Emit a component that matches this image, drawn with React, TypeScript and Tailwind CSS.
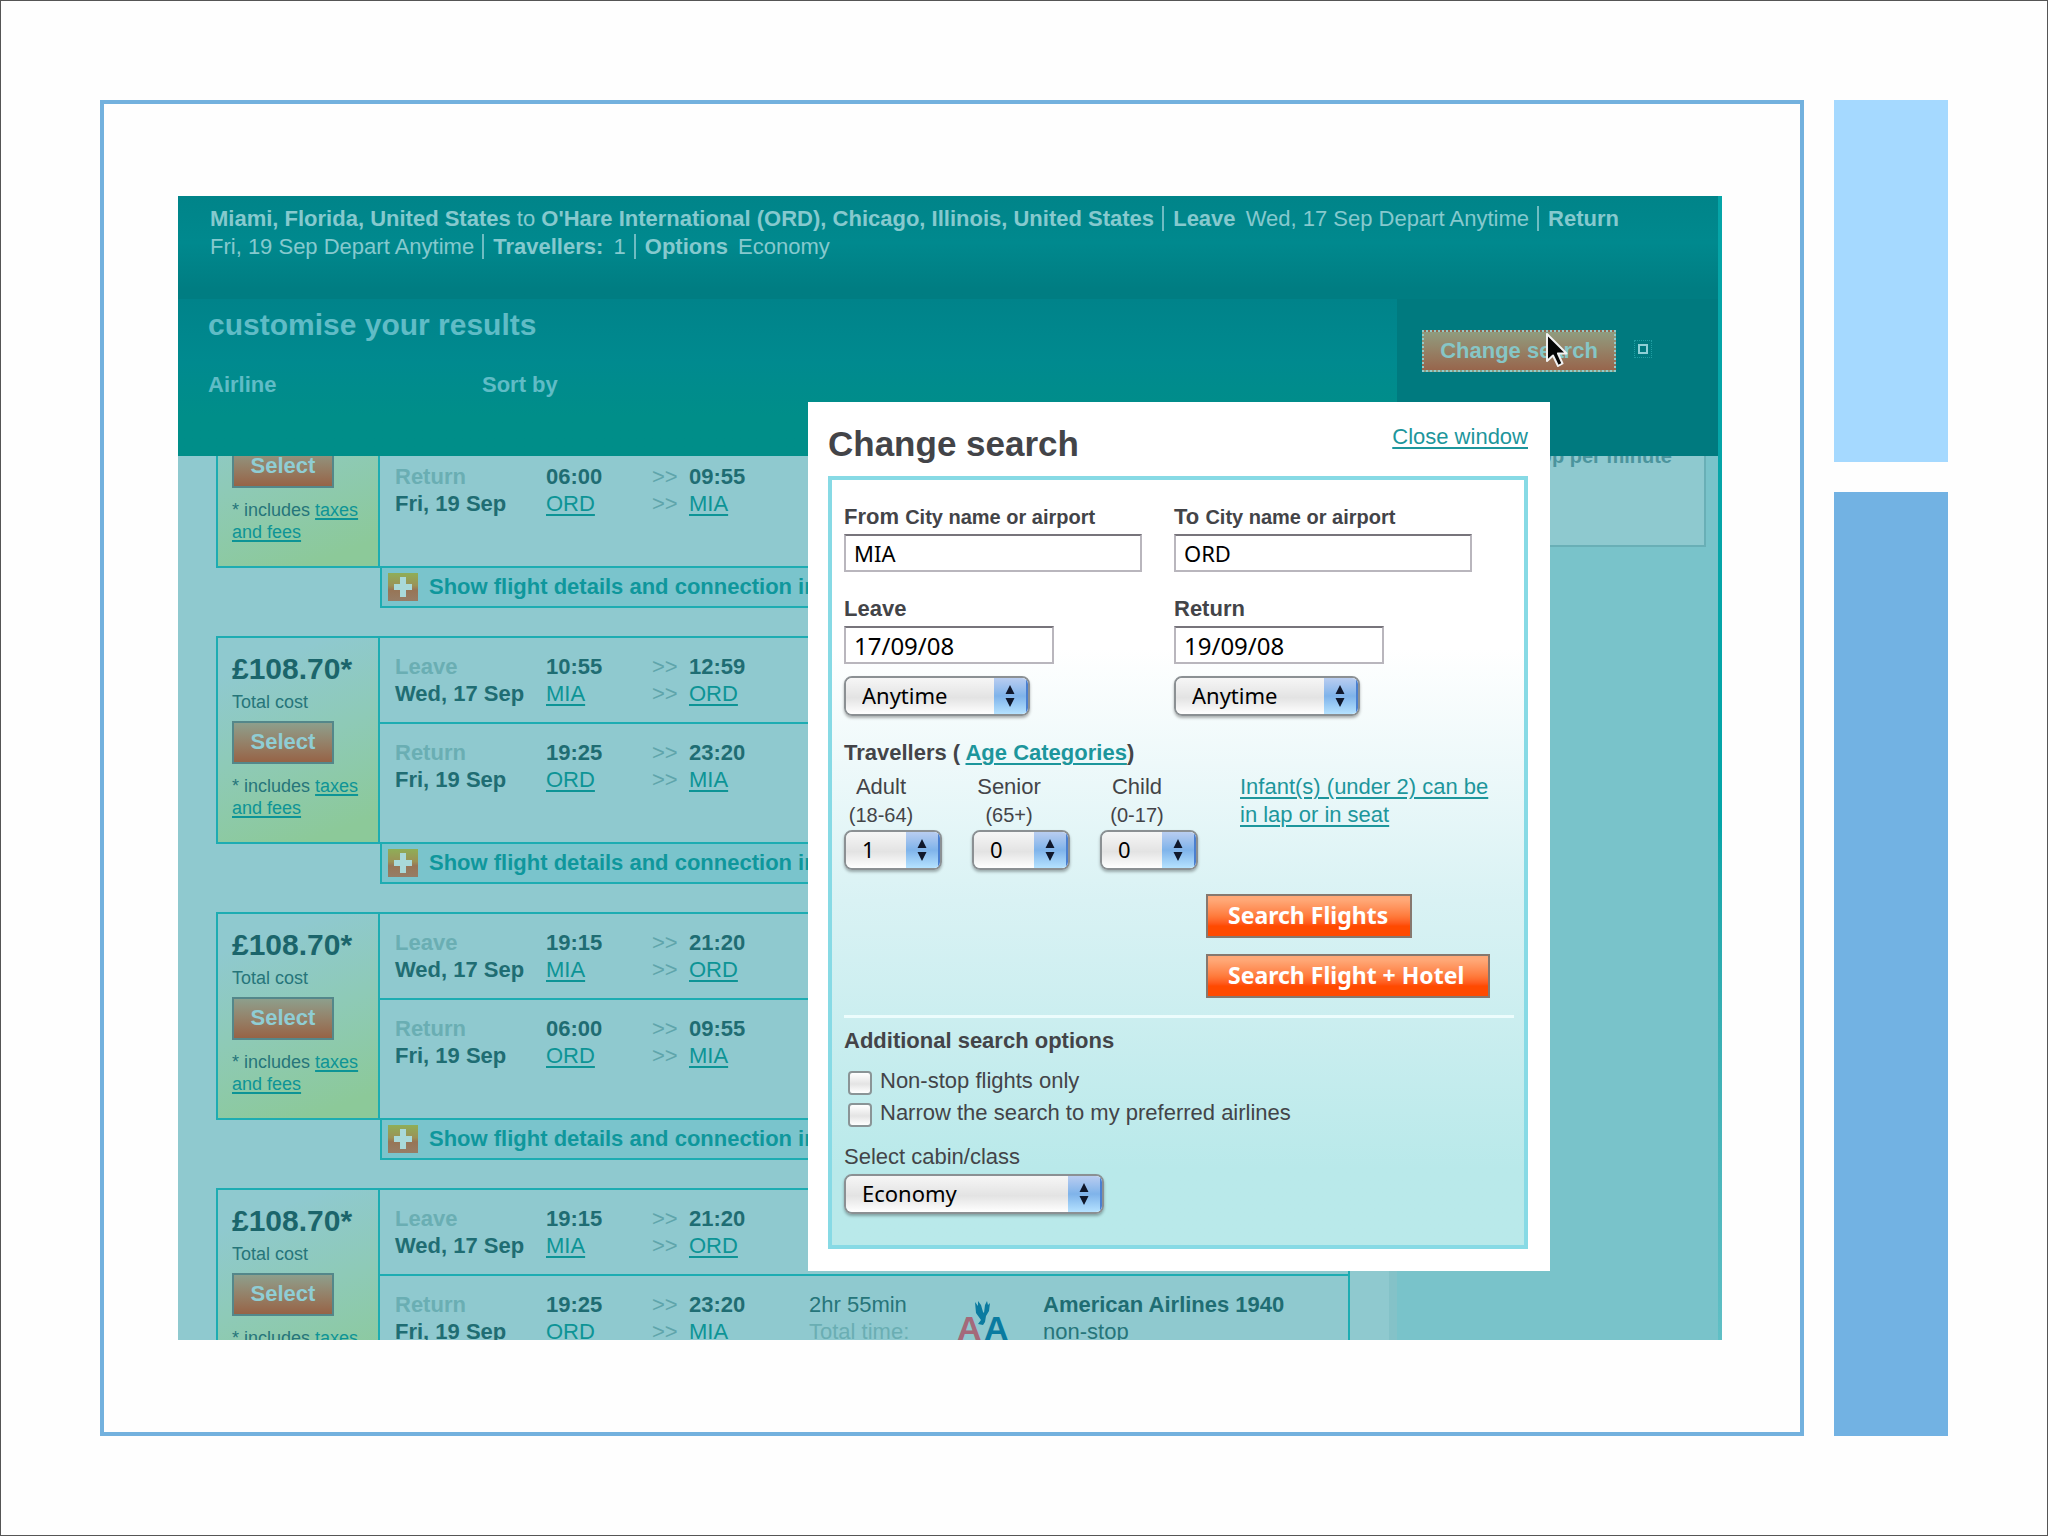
import React from "react";

type Leg = {
  label: string;
  date: string;
  dep: string;
  from: string;
  arr: string;
  to: string;
  service?: { duration: string; name: string; stops: string };
};

const out = (dep: string, arr: string): Leg => ({ label: "Leave", date: "Wed, 17 Sep", dep, from: "MIA", arr, to: "ORD" });
const back = (dep: string, arr: string): Leg => ({ label: "Return", date: "Fri, 19 Sep", dep, from: "ORD", arr, to: "MIA" });

const flights: { id: number; legs: Leg[] }[] = [
  { id: 1, legs: [out("19:15", "21:20"), back("06:00", "09:55")] },
  { id: 2, legs: [out("10:55", "12:59"), back("19:25", "23:20")] },
  { id: 3, legs: [out("19:15", "21:20"), back("06:00", "09:55")] },
  {
    id: 4,
    legs: [
      out("19:15", "21:20"),
      { ...back("19:25", "23:20"), service: { duration: "2hr 55min", name: "American Airlines 1940", stops: "non-stop" } },
    ],
  },
];

function AirlineLogo() {
  return (
    <svg width="56" height="46" viewBox="0 0 56 46" role="img" aria-label="American Airlines">
      <text x="0" y="40" fontFamily="Liberation Sans" fontWeight="bold" fontSize="34" fill="#a4697a">A</text>
      <text x="27" y="40" fontFamily="Liberation Sans" fontWeight="bold" fontSize="34" fill="#0a7ba0">A</text>
      <path d="M18 2 L21 6 L21 1 L24 5 L26 12 L27 13 L28 5 L30 1 L31 5 L33 3 L32 11 L29 16 L28 22 L26 25 L21 24 L24 20 L19 13 Z" fill="#0a7ba0" />
    </svg>
  );
}

function PlusIcon() {
  return (
    <svg width="30" height="28" viewBox="0 0 30 28" className="shrink-0" aria-hidden="true">
      <defs>
        <linearGradient id="plus" x1="0" y1="0" x2="0" y2="1">
          <stop offset="0" stopColor="#8fae57" />
          <stop offset="0.45" stopColor="#9b9257" />
          <stop offset="0.6" stopColor="#977556" />
          <stop offset="1" stopColor="#967d66" />
        </linearGradient>
      </defs>
      <rect width="30" height="28" fill="url(#plus)" />
      <path d="M12 4h6v7h6v6h-6v7h-6v-7H6v-6h6z" fill="#a9d9d9" />
    </svg>
  );
}

function ResultCard({ legs }: { legs: Leg[] }) {
  return (
    <article className="mb-7">
      <div className="flex h-[208px] border-2 border-[#1dacb2]">
        <div className="w-[162px] shrink-0 border-r-2 border-[#1dacb2] bg-linear-160 from-[#8fc9cf] from-15% via-[#8ecab7] via-50% to-[#8cc999] to-90% pl-[14px] pt-[13px]">
          <div className="text-[30px] leading-9 font-bold text-[#1b656b]">£108.70*</div>
          <div className="mt-[1px] text-lg leading-7 text-[#26757a]">Total cost</div>
          <button className="mt-[5px] block h-[43px] w-[102px] border-2 border-[#54878a] bg-linear-to-b from-[#8d9f8c] to-[#966346] pb-[2px] text-[22px] font-bold text-[#8fcdd4]">
            Select
          </button>
          <p className="mt-[11px] text-lg leading-[22px] text-[#26757a]">
            * includes{" "}
            <a href="#fees" className="text-[#0d9496] underline decoration-2 underline-offset-2">
              taxes
              <br />
              and fees
            </a>
          </p>
        </div>
        <table className="h-full w-full table-fixed border-collapse text-left text-[22px] leading-[27px]">
          <colgroup>
            <col className="w-[166px]" />
            <col className="w-[106px]" />
            <col className="w-[37px]" />
            <col className="w-[120px]" />
            <col className="w-[148px]" />
            <col className="w-[86px]" />
            <col />
          </colgroup>
          <tbody className="align-top">
            {legs.map((l, i) => (
              <tr key={l.label} className={i === 0 ? "h-[85px] border-b-2 border-[#1dacb2]" : ""}>
                <th scope="row" className="pt-[15px] pl-[15px] font-bold text-[#1f6d73]">
                  <div className="text-[#6aaeb3]">{l.label}</div>
                  {l.date}
                </th>
                <td className="pt-[15px]">
                  <div className="font-bold text-[#1f6d73]">{l.dep}</div>
                  <a href="#airport" className="text-[#0d9496] underline decoration-2 underline-offset-3">{l.from}</a>
                </td>
                <td className="pt-[15px] text-[#5fa5ab]">
                  <div>&gt;&gt;</div>
                  <div>&gt;&gt;</div>
                </td>
                <td className="pt-[15px]">
                  <div className="font-bold text-[#1f6d73]">{l.arr}</div>
                  <a href="#airport" className="text-[#0d9496] underline decoration-2 underline-offset-3">{l.to}</a>
                </td>
                <td className="pt-[15px]">
                  {l.service && (
                    <>
                      <div className="text-[#26757a]">{l.service.duration}</div>
                      <div className="text-[#6aaeb3]">Total time:</div>
                    </>
                  )}
                </td>
                <td className="pt-6">{l.service && <AirlineLogo />}</td>
                <td className="pt-[15px]">
                  {l.service && (
                    <>
                      <div className="font-bold text-[#1f6d73]">{l.service.name}</div>
                      <div className="text-[#26757a]">{l.service.stops}</div>
                    </>
                  )}
                </td>
              </tr>
            ))}
          </tbody>
        </table>
      </div>
      <a
        href="#details"
        className="ml-[164px] flex h-10 items-center gap-[11px] border-x-2 border-b-2 border-[#1dacb2] bg-[#7ac4cc] pl-[6px] text-[22px] leading-7 font-bold text-[#0f979c]"
      >
        <PlusIcon />
        <span className="whitespace-nowrap">Show flight details and connection information</span>
      </a>
    </article>
  );
}

function AquaSelect({ id, label, width, options }: { id: string; label?: string; width: string; options: string[] }) {
  return (
    <div className={`relative h-10 ${width} overflow-hidden rounded-lg border-2 border-[#8b9093] shadow-[0_2px_3px_rgba(0,0,0,0.3)]`}>
      <select
        id={id}
        aria-label={label}
        className="block h-full w-full appearance-none bg-linear-to-b from-[#f6f6f6] via-[#e3e3e3] via-55% to-[#ffffff] pb-[2px] pl-4 font-['Noto_Sans',sans-serif] text-[22px] text-black outline-none"
      >
        {options.map((o) => (
          <option key={o}>{o}</option>
        ))}
      </select>
      <span className="pointer-events-none absolute inset-y-0 right-0 grid w-[34px] place-items-center border-r-2 border-[#4a7fd0] bg-linear-to-b from-[#b9cdf0] via-[#7fb3ea] via-50% to-[#b5e2ff]">
        <svg width="10" height="24" viewBox="0 0 10 24" aria-hidden="true">
          <path d="M5 1 L9.5 10 H0.5 Z M5 23 L9.5 14 H0.5 Z" fill="#10182c" />
        </svg>
      </span>
    </div>
  );
}

const field =
  "block h-[38px] border-2 border-[#b9b6bd] border-t-[#77747b] bg-white pl-2 font-['Noto_Sans',sans-serif] text-black outline-none";
const orange =
  "h-11 border-2 border-[#86786f] bg-linear-to-b from-[#ffa877] from-10% via-[#ff7b3c] via-50% to-[#ff4a00] to-75% pb-[2px] pl-5 text-left font-['Noto_Sans',sans-serif] text-[23px] font-bold text-white";
const link = "text-[#1d969c] underline decoration-2 underline-offset-3";

function Journey({ place, date }: { place: [string, string, string]; date: [string, string] }) {
  return (
    <div className="w-[298px]">
      <label htmlFor={place[0]} className="block font-bold">
        {place[0]} <span className="text-xl">{place[1]}</span>
      </label>
      <input id={place[0]} defaultValue={place[2]} className={`${field} mt-[3px] w-full text-[22px]`} />
      <label htmlFor={date[0]} className="mt-[23px] block font-bold">{date[0]}</label>
      <input id={date[0]} defaultValue={date[1]} className={`${field} mt-[3px] mb-3 w-[210px] text-2xl`} />
      <AquaSelect id={`${date[0]}-time`} label={`${date[0]} time`} width="w-[186px]" options={["Anytime", "Morning", "Evening"]} />
    </div>
  );
}

const travellers = [
  { name: "Adult", ages: "(18-64)", options: ["1", "2", "3"] },
  { name: "Senior", ages: "(65+)", options: ["0", "1", "2"] },
  { name: "Child", ages: "(0-17)", options: ["0", "1", "2"] },
];

function ChangeSearchDialog() {
  return (
    <section
      role="dialog"
      aria-label="Change search"
      className="absolute top-[206px] left-[630px] z-20 w-[742px] bg-white pt-[21px] pr-[22px] pb-[22px] pl-5 text-[22px] leading-7 text-[#434448]"
    >
      <header className="flex items-start justify-between">
        <h2 className="text-[35px] leading-[42px] font-bold">Change search</h2>
        <a href="#close" className={link}>Close window</a>
      </header>
      <form className="mt-[11px] border-4 border-[#87dae5] bg-linear-to-b from-white from-22% via-[#d9f2f4] via-55% to-[#b9e9ea] to-90% pt-[23px] pr-[10px] pb-[31px] pl-3">
        <div className="flex gap-8">
          <Journey place={["From", "City name or airport", "MIA"]} date={["Leave", "17/09/08"]} />
          <Journey place={["To", "City name or airport", "ORD"]} date={["Return", "19/09/08"]} />
        </div>
        <div className="mt-[23px] font-bold">
          Travellers ( <a href="#ages" className={link}>Age Categories</a>)
        </div>
        <div className="mt-[6px] flex">
          <div className="flex gap-[30px]">
            {travellers.map((t) => (
              <div key={t.name} className="w-[98px]">
                <label htmlFor={t.name} className="mb-[1px] block pr-6 text-center">
                  {t.name}
                  <span className="block text-xl leading-7 whitespace-nowrap">{t.ages}</span>
                </label>
                <AquaSelect id={t.name} width="w-[98px]" options={t.options} />
              </div>
            ))}
          </div>
          <a href="#infants" className={`${link} ml-[42px] w-[260px]`}>Infant(s) (under 2) can be in lap or in seat</a>
        </div>
        <div className="mt-6 flex flex-col items-start gap-4 pl-[362px]">
          <button type="button" className={`${orange} w-[206px]`}>Search Flights</button>
          <button type="button" className={`${orange} w-[284px]`}>Search Flight + Hotel</button>
        </div>
        <hr className="mt-[17px] border-t-3 border-[#ecfcfc]" />
        <h3 className="mt-[9px] mb-3 font-bold">Additional search options</h3>
        {["Non-stop flights only", "Narrow the search to my preferred airlines"].map((t) => (
          <label key={t} className="flex h-8 gap-2 pl-1">
            <input
              type="checkbox"
              className="mt-1 size-6 shrink-0 appearance-none rounded border-2 border-[#8a9496] bg-linear-to-b from-white via-[#e4e4e4] via-55% to-white"
            />
            <span>{t}</span>
          </label>
        ))}
        <label htmlFor="cabin" className="mt-3 mb-[3px] block">Select cabin/class</label>
        <AquaSelect id="cabin" width="w-[260px]" options={["Economy", "Business", "First"]} />
      </form>
    </section>
  );
}

function Cursor() {
  return (
    <svg width="22" height="36" viewBox="0 0 22 36" className="absolute top-[3px] left-[124px]" aria-hidden="true">
      <path d="M1 1 V28 L7 22.5 L12 33 L16.5 30.5 L12 20.5 H20.5 Z" fill="#050505" stroke="#f2f2f2" strokeWidth="2" strokeLinejoin="round" />
    </svg>
  );
}

function Summary() {
  const next = "ml-[2px] border-l-2 border-[#6fbcc2] pl-[9px]";
  return (
    <p className="h-[103px] bg-linear-to-b from-[#008489] via-[#00898e] via-45% to-[#007d82] to-90% pt-[9px] pr-[78px] pl-8 text-[22px] leading-7 text-[#86c9ce]">
      <b>Miami, Florida, United States</b> to <b>O'Hare International (ORD), Chicago, Illinois, United States</b>{" "}
      <span className={next}><b className="pr-1">Leave</b></span> Wed, 17 Sep Depart Anytime <span className={next}><b>Return</b></span>{" "}
      <span className="whitespace-nowrap">Fri, 19 Sep Depart Anytime</span> <span className={next}><b className="pr-1">Travellers:</b></span> 1{" "}
      <span className={next}><b className="pr-1">Options</b></span> Economy
    </p>
  );
}

export default function App() {
  return (
    <div className="flex h-screen gap-[30px] border border-[#555555] bg-[#fefefe] p-[99px] font-['Liberation_Sans',sans-serif]">
      <main className="flex min-w-0 flex-1 border-4 border-[#73b1de] pt-[92px] pr-[78px] pb-[92px] pl-[74px]">
        <div className="relative flex min-w-0 flex-1 overflow-hidden bg-[#8fc9cf]">
          <div className="flex min-w-0 flex-1 flex-col">
            <header className="shrink-0">
              <Summary />
              <div className="flex h-[157px] bg-[#007a7f]">
                <div className="flex-1 bg-linear-to-b from-[#00838a] via-[#008a8f] via-40% to-[#008e89] to-75% pl-[30px] text-[#60bcc6]">
                  <h1 className="pt-2 text-[30px] leading-9 font-bold">customise your results</h1>
                  <div className="mt-7 flex text-[22px] leading-7 font-bold">
                    <div className="w-[274px]">Airline</div>
                    <div>Sort by</div>
                  </div>
                </div>
                <div className="flex w-[321px] items-start gap-[18px] pt-[31px] pl-[25px]">
                  <div className="relative">
                    <button className="block h-[42px] w-[194px] border-2 border-dotted border-[#93cbca] bg-linear-to-b from-[#8f9c7f] to-[#97654c] pb-[2px] text-[22px] font-bold text-[#86c6c6]">
                      Change search
                    </button>
                    <Cursor />
                  </div>
                  <div className="mt-[10px] border border-dotted border-[#1f9ea2] p-[3px]">
                    <div className="size-[10px] border-2 border-[#8fd0d6]" />
                  </div>
                </div>
              </div>
            </header>
            <div className="flex min-h-0 flex-1 overflow-hidden">
              <div className="min-w-0 flex-1 border-r-8 border-[#84c2c8] pr-[39px] pl-[38px]">
                <div className="-mt-24">
                  {flights.map((f) => (
                    <ResultCard key={f.id} legs={f.legs} />
                  ))}
                </div>
              </div>
              <aside className="w-[321px] shrink-0 bg-[#79c3ca] pr-3">
                <div className="-mt-6 h-[115px] border-2 border-[#69afb6] bg-[#8ec9cf] pt-2 pr-8 text-right text-xl leading-7 font-bold text-[#4b949d]">
                  10p per minute
                </div>
              </aside>
            </div>
          </div>
          <div className="w-1 shrink-0 bg-linear-to-b from-[#05a5a8] from-55% to-[#60bfc5]" />
          <ChangeSearchDialog />
        </div>
      </main>
      <div className="flex w-[114px] shrink-0 flex-col gap-[30px]">
        <div className="h-[362px] bg-[#a5d9ff]" />
        <div className="flex-1 bg-[#72b2e3]" />
      </div>
    </div>
  );
}
